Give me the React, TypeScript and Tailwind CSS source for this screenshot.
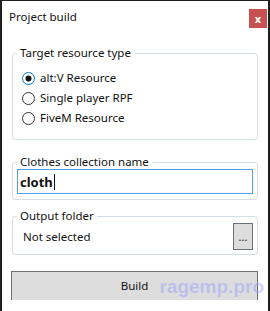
import React from "react";

const font = { fontFamily: '"Noto Sans", "Open Sans", sans-serif' };

function Radio({ checked, label }: { checked?: boolean; label: string }) {
  return (
    <label className="flex h-[20px] items-center">
      <svg width="13" height="13" viewBox="0 0 13 13" className="ml-[5px] shrink-0">
        <circle cx="6.5" cy="6.5" r="6" fill="#fff" stroke={checked ? "#0078d7" : "#333"} strokeWidth="1" />
        {checked ? <circle cx="6.5" cy="6.5" r="3" fill="#111" /> : null}
      </svg>
      <span className="ml-[5px] text-[11.5px] leading-[16px] text-[#111]">{label}</span>
    </label>
  );
}

function Group({ title, children, className }: { title: string; children: React.ReactNode; className?: string }) {
  return (
    <fieldset className={"rounded-[3px] border border-[#d5dfe5] px-[4px] " + (className ?? "")}>
      <legend className="px-[3px] text-[11.5px] leading-[16px] text-[#111]">{title}</legend>
      {children}
    </fieldset>
  );
}

export default function App() {
  return (
    <div className="h-[311px] w-[270px] overflow-hidden bg-[#1f1f1f] pl-[2px] pr-[2px] pt-[1px]" style={font}>
      <div className="relative h-[310px] w-[266px] bg-white">
        <div className="flex h-[44px] items-start justify-between">
          <span className="ml-[7px] mt-[7px] text-[11.5px] leading-[18px] text-[#111]">Project build</span>
          <button className="mr-[1px] mt-[8px] flex h-[19px] w-[18px] items-center justify-center bg-[#c75050] text-[11px] font-bold leading-none text-white">
            x
          </button>
        </div>

        <div className="px-[10px]">
          <Group title="Target resource type" className="pb-[11px]">
            <div className="mt-[7px] flex flex-col">
              <Radio checked label="alt:V Resource" />
              <Radio label="Single player RPF" />
              <Radio label="FiveM Resource" />
            </div>
          </Group>

          <Group title="Clothes collection name" className="mt-[14px] pb-[5px]">
            <div className="-mt-[1px] flex h-[25px] items-center border border-[#569de5] pl-[2px]">
              <span className="text-[13px] font-bold leading-[18px] text-[#111]">cloth</span>
              <span className="ml-[1px] h-[16px] w-[1px] bg-[#111]" />
            </div>
          </Group>

          <Group title="Output folder" className="mt-[8px] pb-[4px]">
            <div className="-mt-[1px] flex h-[27px] items-center justify-between">
              <span className="ml-[6px] text-[11.5px] leading-[16px] text-[#111]">Not selected</span>
              <button className="flex h-[27px] w-[20px] items-center justify-center border border-[#707070] bg-[#dddddd] text-[11px] leading-none text-[#111]">
                ...
              </button>
            </div>
          </Group>
        </div>

        <div className="relative mx-[9px] mt-[16px]">
          <button className="flex h-[29px] w-[247px] items-center justify-center border border-b-0 border-[#707070] bg-[#dddddd] text-[11.5px] text-[#111]">
            Build
          </button>
          <span
            className="pointer-events-none absolute right-[-5px] top-[5px] text-[19px] font-bold leading-[22px] text-[#9696ff]/45"
            style={{ fontFamily: '"Liberation Sans", Arial, sans-serif' }}
          >
            ragemp.pro
          </span>
        </div>
      </div>
    </div>
  );
}
